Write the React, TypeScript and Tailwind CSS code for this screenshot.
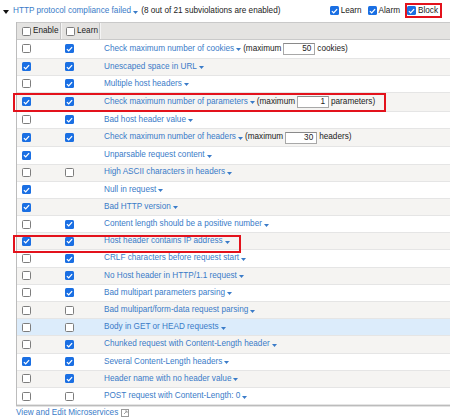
import React from "react";

function Cb({ checked }: { checked: boolean }) {
  return checked ? (
    <span className="inline-flex w-[9px] h-[9px] rounded-[1.5px] bg-[#1a6fe3] items-center justify-center shrink-0">
      <svg width="7" height="6" viewBox="0 0 7 6">
        <path d="M0.9 3.1 L2.7 4.9 L6.1 1.1" stroke="white" strokeWidth="1.3" fill="none" />
      </svg>
    </span>
  ) : (
    <span className="inline-block w-[9px] h-[9px] rounded-[1.5px] border border-[#7d7d7d] bg-white shrink-0" />
  );
}

function Caret() {
  return (
    <svg width="5" height="3" viewBox="0 0 5 3" className="ml-[2px] mt-[2px] shrink-0">
      <path d="M0 0 H5 L2.5 3 Z" fill="#3a7bc8" />
    </svg>
  );
}

function Box({ v }: { v: string }) {
  return (
    <span className="inline-block w-[32px] h-[12px] border border-[#a8a8a8] border-t-[#8a8a8a] bg-white text-right pr-[3px] leading-[10px] text-[#222] mx-[2px]">
      {v}
    </span>
  );
}

type Row = {
  t: string;
  e: boolean;
  l: boolean | null;
  max?: [string, string];
};

const rows: Row[] = [
  { t: "Check maximum number of cookies", e: false, l: true, max: ["50", "cookies)"] },
  { t: "Unescaped space in URL", e: true, l: true },
  { t: "Multiple host headers", e: false, l: true },
  { t: "Check maximum number of parameters", e: true, l: true, max: ["1", "parameters)"] },
  { t: "Bad host header value", e: false, l: true },
  { t: "Check maximum number of headers", e: true, l: true, max: ["30", "headers)"] },
  { t: "Unparsable request content", e: true, l: null },
  { t: "High ASCII characters in headers", e: false, l: false },
  { t: "Null in request", e: true, l: null },
  { t: "Bad HTTP version", e: true, l: null },
  { t: "Content length should be a positive number", e: false, l: true },
  { t: "Host header contains IP address", e: true, l: true },
  { t: "CRLF characters before request start", e: false, l: true },
  { t: "No Host header in HTTP/1.1 request", e: false, l: true },
  { t: "Bad multipart parameters parsing", e: false, l: true },
  { t: "Bad multipart/form-data request parsing", e: false, l: false },
  { t: "Body in GET or HEAD requests", e: false, l: false },
  { t: "Chunked request with Content-Length header", e: false, l: true },
  { t: "Several Content-Length headers", e: true, l: true },
  { t: "Header name with no header value", e: false, l: true },
  { t: "POST request with Content-Length: 0", e: false, l: false },
];

export default function App() {
  return (
    <div
      className="relative w-[450px] h-[418px] bg-white overflow-hidden text-[8.2px] text-[#333]"
      style={{ fontFamily: '"Liberation Sans", Arial, sans-serif' }}
    >
      {/* Title bar */}
      <div className="flex items-center h-[22px] pl-[3px] pr-[12px]">
        <svg width="6" height="4" viewBox="0 0 6 4" className="mr-[4px] mt-[1px]">
          <path d="M0 0 H6 L3 4 Z" fill="#111" />
        </svg>
        <span className="text-[#3a7bc8]">HTTP protocol compliance failed</span>
        <Caret />
        <span className="ml-[3px] text-[#222]">(8 out of 21 subviolations are enabled)</span>
        <div className="ml-auto flex items-center">
          <Cb checked />
          <span className="ml-[2px] text-[#222]">Learn</span>
          <span className="ml-[6px]" />
          <Cb checked />
          <span className="ml-[2px] text-[#222]">Alarm</span>
          <span className="ml-[7px]" />
          <Cb checked />
          <span className="ml-[2px] text-[#222]">Block</span>
        </div>
      </div>

      {/* Table */}
      <div className="ml-[16px] w-[434px] border-l border-b border-[#bcbcbc] shadow-[0_1px_0_#e2e2e2]">
        <div className="flex h-[18px] bg-[#e4e3e1] border-t border-b border-[#c9c9c9] text-[#222]">
          <div className="w-[44px] flex items-center pl-[5px] border-r border-[#c4c4c4]">
            <Cb checked={false} />
            <span className="ml-[2px]">Enable</span>
          </div>
          <div className="w-[39px] flex items-center pl-[4px] border-r border-[#c4c4c4] border-l border-l-[#f4f4f4]">
            <Cb checked={false} />
            <span className="ml-[2px]">Learn</span>
          </div>
          <div className="flex-1 border-l border-l-[#f4f4f4]" />
        </div>
        {rows.map((r, i) => {
          const bg = i === 16 ? "bg-[#dcecfb]" : i % 2 === 1 ? "bg-[#f5f4f2]" : "bg-white";
          const h = r.max ? "h-[18.6px]" : "h-[17.2px]";
          return (
            <div key={i} className={`flex items-center border-b border-[#e5e5e5] ${bg} ${h}`}>
              <div className="w-[44px] flex items-center pl-[5px]">
                <Cb checked={r.e} />
              </div>
              <div className="w-[39px] flex items-center pl-[4px]">
                {r.l !== null && <Cb checked={r.l} />}
              </div>
              <div className="flex items-center pl-[4px] whitespace-nowrap">
                <span className="text-[#3a7bc8]">{r.t}</span>
                <Caret />
                {r.max && (
                  <>
                    <span className="ml-[2px] text-[#222]">(maximum</span>
                    <Box v={r.max[0]} />
                    <span className="text-[#222]">{r.max[1]}</span>
                  </>
                )}
              </div>
            </div>
          );
        })}
      </div>

      {/* Footer link */}
      <div className="flex items-center ml-[16px] mt-[2px] h-[10px]">
        <span className="text-[#3a7bc8]">View and Edit Microservices</span>
        <svg width="8" height="8" viewBox="0 0 8 8" className="ml-[3px]">
          <rect x="0.5" y="0.5" width="7" height="7" fill="none" stroke="#9a9a9a" />
          <path d="M3 5 L6 2 M4 2 H6 V4" stroke="#9a9a9a" strokeWidth="0.9" fill="none" />
        </svg>
      </div>

      {/* Red annotation boxes */}
      <div className="absolute left-[405px] top-[3px] w-[37px] h-[15px] border-2 border-[#e3121c]" />
      <div className="absolute left-[13px] top-[93px] w-[373px] h-[19px] border-2 border-[#e3121c]" />
      <div className="absolute left-[13px] top-[235px] w-[228px] h-[18px] border-2 border-[#e3121c]" />
    </div>
  );
}
